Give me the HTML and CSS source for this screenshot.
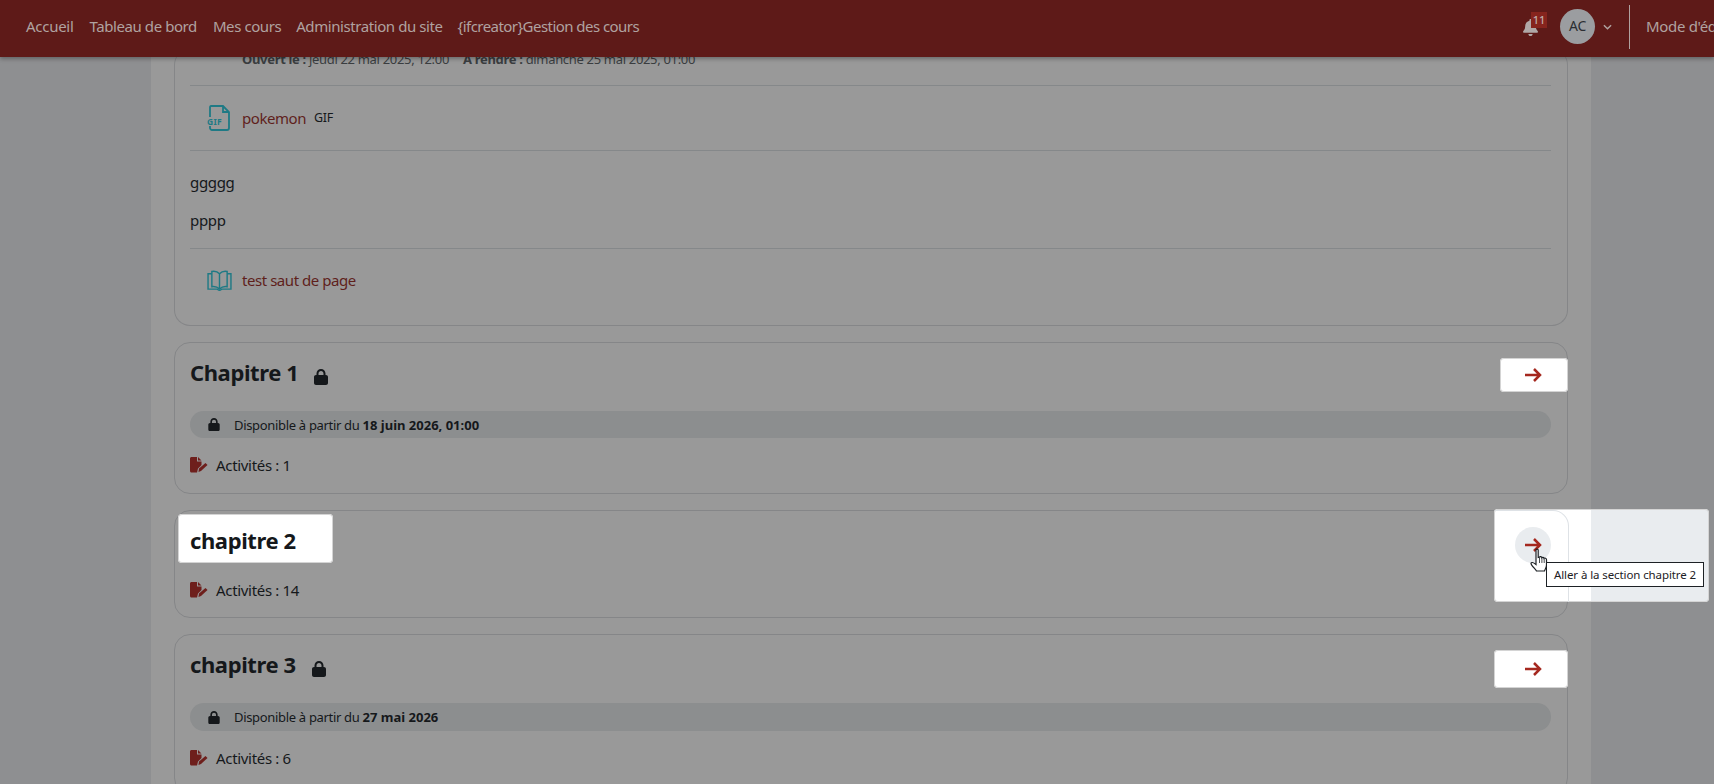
FILE: index.html
```html
<!DOCTYPE html>
<html lang="fr">
  <head>
    <meta charset="UTF-8">
    <title>Cours</title>
    <link rel="stylesheet" href="styles.css">
  </head>
  <body>
    <svg class="defs" width="0" height="0">
      <symbol id="lock" viewBox="0 0 448 512"><path d="M144 144v48H304V144c0-44.2-35.8-80-80-80s-80 35.8-80 80zM80 192V144C80 64.5 144.5 0 224 0s144 64.5 144 144v48h16c35.3 0 64 28.7 64 64V448c0 35.3-28.7 64-64 64H64c-35.3 0-64-28.7-64-64V256c0-35.3 28.7-64 64-64H80z"/></symbol>
      <symbol id="arrow" viewBox="0 0 18 16"><path d="M1 8H16M10 2L16 8L10 14" fill="none" stroke="currentColor" stroke-width="2.500"/></symbol>
      <symbol id="activity" viewBox="0 0 18 16"><path d="M1.500 0H7V4.500H11.500V8L8 11.500L7 15.500H1.500C.7 15.500 0 14.800 0 14V1.500C0 .7 .7 0 1.500 0zM8 0L11.500 3.500H8z"/><path d="M9 11.500L15.500 6L17.500 8L11 14L8.500 15z"/></symbol>
    </svg>

    <header class="navbar">
      <nav class="nav-links">
        <a href="#">Accueil</a>
        <a href="#">Tableau de bord</a>
        <a href="#">Mes cours</a>
        <a href="#">Administration du site</a>
        <a href="#">{ifcreator}Gestion des cours</a>
      </nav>
      <div class="nav-user">
        <div class="bell">
          <svg class="bell-icon" viewBox="0 0 448 512"><path d="M224 0c-17.7 0-32 14.3-32 32V51.2C119 66 64 130.6 64 208v18.8c0 47-17.3 92.4-48.5 127.6l-7.4 8.3c-8.4 9.4-10.4 22.9-5.3 34.4S19.4 416 32 416H416c12.6 0 24-7.4 29.2-18.9s3.1-25-5.3-34.4l-7.4-8.3C401.3 319.2 384 273.9 384 226.8V208c0-77.4-55-142-128-156.8V32c0-17.7-14.3-32-32-32zm45.3 493.3c12-12 18.7-28.3 18.7-45.3H224 160c0 17 6.7 33.3 18.7 45.3s28.3 18.7 45.3 18.7s33.3-6.7 45.3-18.7z"/></svg>
          <span class="badge">11</span>
        </div>
        <div class="avatar">AC</div>
        <svg class="chevron" viewBox="0 0 10 6"><path d="M1 1L5 5L9 1" fill="none" stroke="currentColor" stroke-width="1.600"/></svg>
        <div class="edit-mode">Mode d'édition</div>
      </div>
    </header>

    <main class="page">
      <section class="card card-cut">
        <div class="dates"><b>Ouvert le :</b> jeudi 22 mai 2025, 12:00 <b class="due">À rendre :</b> dimanche 25 mai 2025, 01:00</div>
        <div class="row activity">
          <svg class="mod-icon" viewBox="0 0 23 26" fill="none" stroke="currentColor" stroke-width="1.800">
            <path d="M4 1H16L22 7V23C22 24 21 25 20 25H5C4 25 3 24 3 23V21M3 12V2.500C3 1.500 3.500 1 4 1M16 1V7H22"/>
            <text x="0" y="19.500" class="gif-mark">GIF</text>
          </svg>
          <a href="#">pokemon</a>
          <span class="type">GIF</span>
        </div>
        <div class="row label">
          <p>ggggg</p>
          <p>pppp</p>
        </div>
        <div class="row activity activity-last">
          <svg class="mod-icon book" viewBox="0 0 26 22" fill="none" stroke="currentColor" stroke-width="1.500">
            <path d="M13 4C11 1.800 7.500 1 5 1.500V17.500C8 17 11 18 13 20C15 18 18 17 21 17.500V1.500C18.500 1 15 1.800 13 4V20"/>
            <path d="M5 4H1V20H10.500L13 21.500L15.500 20H25V4H21"/>
          </svg>
          <a href="#">test saut de page</a>
        </div>
      </section>

      <section class="card card-one">
        <div class="card-head">
          <h3 class="title">Chapitre 1 <svg class="title-lock"><use href="#lock"/></svg></h3>
          <button class="go-btn"><svg class="arrow"><use href="#arrow"/></svg></button>
        </div>
        <div class="pill"><svg class="pill-lock"><use href="#lock"/></svg><span>Disponible à partir du <b>18 juin 2026, 01:00</b></span></div>
        <div class="count"><svg class="count-icon"><use href="#activity"/></svg>Activités : 1</div>
      </section>

      <section class="card card-two">
        <div class="card-head">
          <h3 class="title title-lit">chapitre 2</h3>
        </div>
        <div class="count"><svg class="count-icon"><use href="#activity"/></svg>Activités : 14</div>
        <div class="spot">
          <span class="go-round"><svg class="arrow"><use href="#arrow"/></svg></span>
          <svg class="hand" viewBox="0 0 18 24"><path d="M6 2C6 .8 8.200 .8 8.200 2V9.500L9.500 9.200C10 8.300 11.500 8.500 11.800 9.700C12.300 9 13.800 9.200 14 10.400C14.600 9.900 16.500 10.200 16.500 11.700V17C16.500 20 15 21 14.500 23H6.500C6 21.500 1 17.500 1 15.500C1 14 3 14 6 16.500z" fill="#fff" stroke="#1d2125" stroke-width="1.200"/><path d="M9.500 10V15M11.900 10V15M14.200 11V15" fill="none" stroke="#1d2125" stroke-width=".8"/></svg>
          <div class="tip">Aller à la section chapitre 2</div>
        </div>
      </section>

      <section class="card card-three">
        <div class="card-head">
          <h3 class="title">chapitre 3 <svg class="title-lock"><use href="#lock"/></svg></h3>
          <button class="go-btn go-btn-wide"><svg class="arrow"><use href="#arrow"/></svg></button>
        </div>
        <div class="pill"><svg class="pill-lock"><use href="#lock"/></svg><span>Disponible à partir du <b>27 mai 2026</b></span></div>
        <div class="count"><svg class="count-icon"><use href="#activity"/></svg>Activités : 6</div>
      </section>
    </main>
  </body>
</html>
```

FILE: styles.css
```css
* {
  box-sizing: border-box;
}

html, body {
  margin: 0;
  height: 784px;
  overflow: hidden;
}

body {
  background: #8e8f91;
  color: #15181b;
  font: 15px/24px "Noto Sans", sans-serif;
  letter-spacing: -.32px;
}

.defs {
  position: absolute;
}

a {
  text-decoration: none;
}

/* barre du haut */
.navbar {
  position: relative;
  z-index: 2;
  display: flex;
  justify-content: space-between;
  width: 1714px;
  height: 57px;
  padding: 0 0 0 26px;
  background: #5e1a18;
  box-shadow: 0 2px 4px rgba(0, 0, 0, .3);
  overflow: hidden;
}

.nav-links {
  display: flex;
  align-items: center;
  gap: 16px;
  height: 52px;
  letter-spacing: -.42px;
}

.nav-links a {
  color: #b0a2a0;
}

.nav-links a:first-child {
  letter-spacing: -.28px;
}

.nav-links a:nth-child(4) {
  margin-left: -1px;
}

.nav-links a:last-child {
  margin-left: -1px;
  letter-spacing: -.55px;
}

.nav-user {
  display: flex;
  align-items: center;
  height: 53px;
}

.bell {
  position: relative;
  width: 37px;
  height: 35px;
}

.bell-icon {
  position: absolute;
  left: 0;
  top: 10px;
  width: 15px;
  height: 17px;
  fill: #b0a8a7;
}

.badge {
  position: absolute;
  left: 8px;
  top: 3px;
  width: 16px;
  height: 16px;
  background: #86241d;
  color: #bfaeac;
  font-size: 11px;
  font-weight: 500;
  line-height: 15px;
  letter-spacing: 0;
  text-align: center;
}

.avatar {
  width: 35px;
  height: 35px;
  border-radius: 50%;
  background: #9b9da0;
  color: #2b2e32;
  font-size: 14px;
  line-height: 34px;
  text-align: center;
}

.chevron {
  width: 9px;
  height: 6px;
  margin-left: 8px;
  color: #b0a2a0;
}

.edit-mode {
  width: 85px;
  height: 44px;
  margin-left: 17px;
  padding-left: 16px;
  border-left: 1px solid #b0a2a0;
  color: #b0a2a0;
  line-height: 43px;
  white-space: nowrap;
}

/* contenu */
.page {
  display: flow-root;
  width: 1440px;
  height: 727px;
  margin-left: 151px;
  padding: 0 23px;
  background: #999;
}

.card {
  position: relative;
  padding: 0 16px 0 15px;
  margin-bottom: 16px;
  border: 1px solid #858688;
  border-radius: 16px;
}

.card-cut {
  margin-top: -8px;
  padding-bottom: 11px;
  border-top: 0;
}

.dates {
  height: 36px;
  padding-left: 52px;
  color: #3b3e41;
  font-size: 13px;
  line-height: 20px;
}

.due {
  margin-left: 11px;
}

.row {
  border-top: 1px solid #85888a;
}

.activity {
  display: flex;
  align-items: center;
  height: 65px;
  padding-left: 17px;
}

.activity-last {
  height: 66px;
  padding-bottom: 3px;
}

.activity a {
  color: #5f1f1c;
  letter-spacing: -.45px;
}

.mod-icon {
  width: 23px;
  height: 26px;
  margin-right: 12px;
  color: #1f7a85;
}

.book {
  width: 25px;
  height: 21px;
  margin-right: 10px;
}

.gif-mark {
  fill: #1f7a85;
  stroke: none;
  font-size: 8.500px;
  font-weight: 700;
  letter-spacing: .3px;
}

.type {
  margin-left: 8px;
  font-size: 12.500px;
}

.label {
  height: 98px;
  padding-top: 19px;
}

.label p {
  margin: 0 0 14px;
}

.card-head {
  display: flex;
  justify-content: space-between;
  align-items: flex-start;
}

.title {
  display: flex;
  align-items: center;
  margin: 0;
  font-size: 22px;
  font-weight: 700;
  line-height: 28px;
  letter-spacing: -.4px;
}

.title-lock {
  width: 14px;
  height: 16px;
  margin: 9px 0 0 16px;
  fill: #15181b;
}

.go-btn {
  display: flex;
  align-items: center;
  justify-content: center;
  width: 68px;
  height: 34px;
  margin-right: -17px;
  padding: 0 2px 0 0;
  border: 0;
  border-radius: 4px;
  background: #fff;
  box-shadow: inset 0 0 0 1px #d4d4d4;
}

.go-btn-wide {
  width: 74px;
  height: 38px;
  padding: 0 0 0 4px;
}

.arrow {
  width: 18px;
  height: 16px;
  color: #a5281f;
}

.card-one {
  height: 152px;
  padding-top: 15px;
}

.card-two {
  height: 108px;
  padding-top: 3px;
}

.card-three {
  height: 160px;
  padding-top: 15px;
}

.title-lit {
  width: 155px;
  height: 49px;
  margin-left: -12px;
  padding: 6px 0 0 12px;
  border-radius: 4px;
  background: #fff;
  box-shadow: inset 0 0 0 1px #d4d4d4;
  line-height: 40px;
  align-items: flex-start;
}

.pill {
  display: flex;
  align-items: center;
  height: 27px;
  margin-top: 19px;
  padding-left: 18px;
  border-radius: 14px;
  background: #8c8e8f;
  font-size: 13px;
  line-height: 20px;
}

.pill b {
  letter-spacing: 0;
}

.pill-lock {
  width: 12px;
  height: 13px;
  margin-right: 14px;
  fill: #15181b;
}

.card-three .pill {
  height: 28px;
  margin-top: 15px;
}

.count {
  display: flex;
  align-items: center;
  height: 24px;
  margin-top: 15px;
}

.count-icon {
  width: 18px;
  height: 16px;
  margin: 0 8px 0 0;
  fill: #6e1f1c;
}

/* zone mise en avant autour de la fleche */
.spot {
  position: absolute;
  left: 1319px;
  top: -2px;
  width: 215px;
  height: 93px;
  border-radius: 4px;
  background: linear-gradient(to right, #fff 97px, #e9ecef 97px);
  box-shadow: inset 0 0 0 1px #d4d4d4;
  overflow: hidden;
}

.spot::before {
  content: "";
  position: absolute;
  left: 0;
  top: 1px;
  width: 74px;
  height: 120px;
  border: 1px solid #dee2e6;
  border-left: 0;
  border-radius: 0 16px 16px 0;
}

.go-round {
  position: absolute;
  left: 21px;
  top: 18px;
  display: flex;
  align-items: center;
  justify-content: center;
  width: 36px;
  height: 36px;
  border-radius: 50%;
  background: #e9ecef;
}

.hand {
  position: absolute;
  left: 36px;
  top: 39px;
  width: 18px;
  height: 24px;
}

.tip {
  position: absolute;
  left: 52px;
  top: 53px;
  width: 158px;
  height: 25px;
  border: 1px solid #1d2125;
  background: #fff;
  color: #1d2125;
  font-size: 11.500px;
  line-height: 23px;
  letter-spacing: -.1px;
  text-align: center;
  white-space: nowrap;
}
```
